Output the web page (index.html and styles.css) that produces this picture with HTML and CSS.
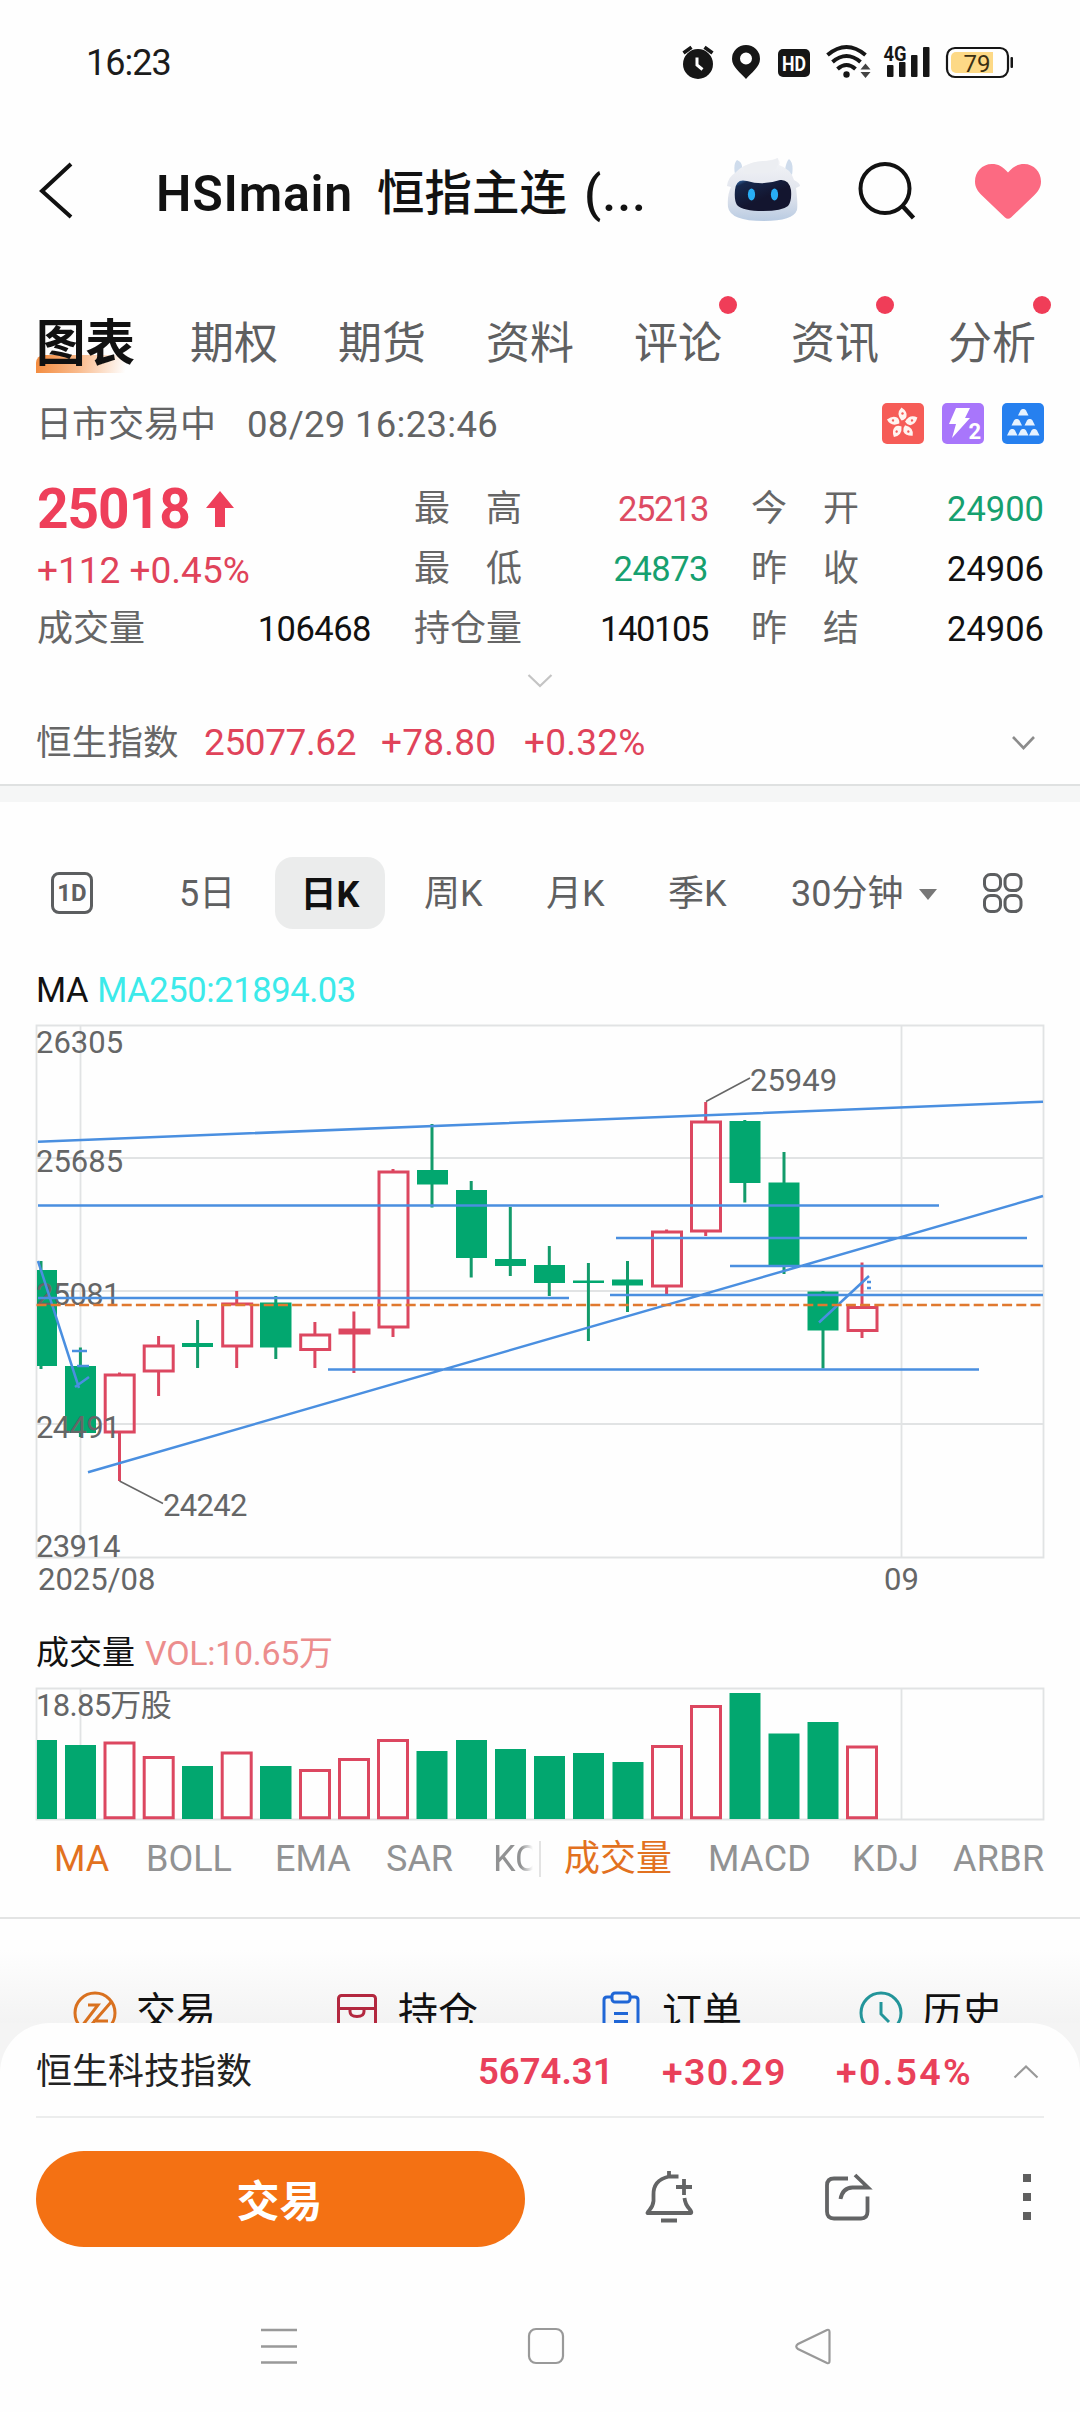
FILE: index.html
```html
<!DOCTYPE html>
<html lang="zh-CN">
<head>
<meta charset="utf-8">
<title>HSImain 恒指主连</title>
<link rel="stylesheet" href="styles.css">
</head>
<body>
<div class="screen">
  <div class="status">
    <span class="clock">16:23</span>
    <svg class="status-icons" viewBox="676 40 344 44" width="344" height="44">
      <g fill="#161616">
        <circle cx="698" cy="64" r="15"/>
        <path d="M683.5 53 691.5 47.2M712.5 53 704.500 47.2" stroke="#161616" stroke-width="3.6"/>
        <path d="M697 57.500V65l5.500 4.500" fill="none" stroke="#fff" stroke-width="3"/>
        <path fill-rule="evenodd" d="M746 45a14 14 0 0 0-14 14c0 8 9 14 14 20 5-6 14-12 14-20a14 14 0 0 0-14-14zm0 7.500a6 6 0 1 1 0 12 6 6 0 0 1 0-12z"/>
        <rect x="778" y="49" width="32" height="28" rx="5"/>
        <circle cx="846.500" cy="74.500" r="3.200"/>
        <path d="M865.500 63.500l5 6h-10zM865.500 78l5-6h-10z" fill="#444"/>
        <rect x="887" y="65" width="6.500" height="12" rx="1"/><rect x="899" y="62" width="6.500" height="15" rx="1"/>
        <rect x="911" y="55" width="6.500" height="22" rx="1"/><rect x="923" y="47" width="6.500" height="30" rx="1"/>
        <rect x="1010.500" y="57" width="2.500" height="11" rx="1"/>
      </g>
      <g fill="none" stroke="#161616" stroke-width="4">
        <path d="M827.500 55q19-16 38 0M832.500 62q14-12 28 0M837.500 69q9-8 18 0"/>
        <rect x="947" y="48" width="61" height="29" rx="8" stroke-width="2.200"/>
      </g>
      <path d="M956 52h37v21h-37a5 5 0 0 1-5-5V57a5 5 0 0 1 5-5z" fill="#fdd986"/>
      <text x="794" y="70.500" class="t-hd" textLength="24" lengthAdjust="spacingAndGlyphs">HD</text>
      <text x="883.500" y="60.500" class="t-4g" textLength="23" lengthAdjust="spacingAndGlyphs">4G</text>
      <text x="977" y="71.500" class="t-bat">79</text>
    </svg>
  </div>

  <header class="header">
    <svg class="back" viewBox="0 0 40 60" width="40" height="60"><path d="M34 4 5 31l29 26" fill="none" stroke="#111" stroke-width="4"/></svg>
    <h1 class="title"><span class="latin">HSImain</span><span class="cn">恒指主连</span><span class="more">(...</span></h1>
    <svg viewBox="720 150 330 80" width="330" height="80">
      <defs>
        <linearGradient id="head" x1="0" y1="0" x2="0" y2="1"><stop offset="0" stop-color="#f3f4f7"/><stop offset=".6" stop-color="#dfe3ec"/><stop offset="1" stop-color="#b9cbe2"/></linearGradient>
        <linearGradient id="visor" x1="0" y1="0" x2=".5" y2=".6"><stop offset="0" stop-color="#3f7fc4"/><stop offset=".25" stop-color="#16284c"/><stop offset="1" stop-color="#13152f"/></linearGradient>
      </defs>
      <path d="M735 174q-2-10 2-14 6 2 5 10zM785 170q1-8 4-11 5 4 3 16z" fill="#cfdcec"/>
      <path d="M727 186q1-9 8-13 8-9 22-11 14-1 20-4 4 4 2 7 12 4 15 15 6 3 6 6l-4 2q2 15 1 22-4 11-33 11-34 0-36-14-1-12 3-20z" fill="url(#head)"/>
      <path d="M743 167q10-6 20-6 10 0 15-3 1 5-1 9-4 6-14 6-12 0-20 1 2-3 0-7z" fill="#eceef2"/>
      <path d="M735 190q1-12 12-9 16 5 33-1 9-1 11 10 1 11-3 16-6 5-25 5-20 0-26-6-3-5-2-15z" fill="url(#visor)"/>
      <ellipse cx="751.500" cy="194.500" rx="3.600" ry="6" fill="#28aef5"/><ellipse cx="774.500" cy="194.500" rx="3.600" ry="6" fill="#28aef5"/>
      <circle cx="885" cy="188.500" r="24.500" fill="none" stroke="#111" stroke-width="4"/>
      <path d="M902.500 206l11 12" stroke="#111" stroke-width="4.500"/>
      <path d="M1008 172.500c5-6 10-8.500 16-8.500 10 0 17 8 17 17.500 0 6-3 10-7 14L1011 217.500q-3 2.500-6 0L982 195.500c-4-4-7-8-7-14 0-9.500 7-17.500 17-17.500 6 0 11 2.500 16 8.500z" fill="#fc6a82"/>
    </svg>
  </header>

  <nav class="tabs">
    <span class="tab on">图表</span><span class="tab">期权</span><span class="tab">期货</span><span class="tab">资料</span>
    <span class="tab dot">评论</span><span class="tab dot">资讯</span><span class="tab dot">分析</span>
  </nav>

  <div class="session">
    <span>日市交易中</span><span class="num">08/29 16:23:46</span>
    <svg viewBox="0 0 162 42" width="162" height="42">
      <rect width="42" height="41" rx="5" fill="#f65c57"/><rect x="60" width="42" height="41" rx="5" fill="#a876fb"/><rect x="120" width="42" height="41" rx="5" fill="#2680ef"/>
      <g fill="#fff4f0" transform="translate(20.500 20.500)">
        <g id="petal"><path d="M-1-3Q-7-10-1-16 5-12 4-7 3-4-1-3z"/><circle cx="0" cy="-10" r="1.200" fill="#f65c57"/></g>
        <use href="#petal" transform="rotate(72)"/><use href="#petal" transform="rotate(144)"/><use href="#petal" transform="rotate(216)"/><use href="#petal" transform="rotate(288)"/>
      </g>
      <path d="M74 5h14l-5 10h5L70 35l4-14h-7z" fill="#fff"/>
      <text x="86.500" y="36" class="t-lv">2</text>
      <g fill="#e6f2ff"><path id="ingot" d="M136 12.500l2.500-5q.8-1.500 2-1.500h1.500q1.200 0 2 1.500l2.500 5z"/><use href="#ingot" x="-6.500" y="10"/><use href="#ingot" x="6.500" y="10"/><use href="#ingot" x="-11" y="20"/><use href="#ingot" y="20"/><use href="#ingot" x="11" y="20"/></g>
    </svg>
  </div>

  <section class="quote">
    <div class="price">25018<svg viewBox="0 0 28 36" width="28" height="36"><path d="M14 0l14 17H19v19H9V17H0z" fill="#ee3f5a"/></svg></div>
    <span class="k wide">最高</span><span class="v up tight">25213</span><span class="k wide">今开</span><span class="v down">24900</span>
    <div class="change">+112 +0.45%</div>
    <span class="k wide">最低</span><span class="v down snug-v">24873</span><span class="k wide">昨收</span><span class="v">24906</span>
    <span class="k first">成交量</span><span class="v snug-v">106468</span>
    <span class="k">持仓量</span><span class="v tight">140105</span><span class="k wide">昨结</span><span class="v">24906</span>
  </section>
  <div class="expand"><svg viewBox="0 0 26 16" width="26" height="16"><path d="M1.500 2 13 13 24.500 2" fill="none" stroke="#c4c4c4" stroke-width="2.200"/></svg></div>

  <div class="index-row">
    <span class="cn">恒生指数</span><span class="last">25077.62</span><span>+78.80</span><span>+0.32%</span>
    <svg viewBox="0 0 24 16" width="24" height="16"><path d="M2 2 12.500 13 23 2" fill="none" stroke="#8c8c8c" stroke-width="2.600"/></svg>
  </div>
  <div class="band"></div>

  <nav class="periods">
    <span class="one-d">1D</span>
    <span>5日</span><span class="on">日K</span><span>周K</span><span>月K</span><span>季K</span>
    <span class="minutes">30分钟<i></i></span>
    <svg viewBox="0 0 42 42" width="42" height="42"><g fill="none" stroke="#5c5e60" stroke-width="3"><rect x="2.500" y="2.500" width="16" height="16" rx="6"/><rect x="23" y="2.500" width="16" height="16" rx="6"/><rect x="2.500" y="23.500" width="16" height="16" rx="6"/><rect x="23" y="23.500" width="16" height="16" rx="6"/></g></svg>
  </nav>

  <div class="legend ma"><span>MA</span><span class="cyan">MA250:21894.03</span></div>

  <svg class="kline" viewBox="0 1020 1080 580" width="1080" height="580">
    <g class="gridline"><path d="M36.500 1025.500H1043.500V1557.500H36.500zM36.500 1158H1043.500M36.500 1291H1043.500M36.500 1424H1043.500M80.500 1025V1557M901.500 1025V1557"/></g>
    <g class="g">
      <path d="M41 1261V1369M80.400 1347.500V1437M197.600 1320V1368M275.800 1296V1359M432 1124V1207.500M471.200 1181V1277.500M510.300 1207V1276M549.300 1246V1296M588.400 1263V1341M627.500 1261V1312M744.800 1120V1202.500M784 1152V1274M823 1291V1368.500"/>
      <rect x="37" y="1270" width="20" height="96"/><rect x="65" y="1366" width="31" height="67"/><rect x="182" y="1343" width="31" height="4"/>
      <rect x="260" y="1302.500" width="31.500" height="45"/><rect x="417" y="1170" width="31" height="14.500"/><rect x="456" y="1190" width="31" height="68"/>
      <rect x="495" y="1259" width="31" height="7"/><rect x="534" y="1265" width="31" height="18"/><rect x="573" y="1280.500" width="31" height="2.500"/>
      <rect x="612" y="1279.500" width="31" height="6"/><rect x="729.500" y="1121" width="31" height="62"/><rect x="768.500" y="1182.500" width="31" height="84.500"/><rect x="807.500" y="1291.500" width="31" height="39"/>
    </g>
    <g class="r">
      <path d="M119.500 1372.500V1375M119.500 1432V1481M158.600 1336V1346M158.600 1371V1396M236.700 1291V1304M236.700 1346V1368M314.900 1322V1335M314.900 1350V1368M353.900 1311.500V1373M393 1169V1172M393 1327V1337M666.600 1229.500V1232M666.600 1286V1294M705.700 1102V1122M705.700 1231V1236M862 1262.500V1308M862 1331V1338"/>
      <rect x="105.200" y="1375" width="29" height="57"/><rect x="144.200" y="1346" width="29" height="25"/><rect x="222.700" y="1304" width="29" height="42"/>
      <rect x="300.700" y="1335" width="29" height="14.500"/><rect x="340" y="1330" width="29" height="3"/><rect x="379" y="1172" width="29" height="155"/>
      <rect x="652.500" y="1232" width="29" height="54"/><rect x="691.500" y="1122" width="29" height="109"/><rect x="848" y="1307.500" width="29" height="23"/>
    </g>
    <g class="axis">
      <text x="36" y="1053">26305</text><text x="36" y="1172">25685</text><text x="36" y="1305" class="snug">25081</text><text x="36" y="1438" class="snug">24491</text><text x="36" y="1557" class="snug">23914</text>
      <text x="163" y="1516" class="snug">24242</text><text x="750" y="1091">25949</text><text x="38" y="1590">2025/08</text><text x="884" y="1590">09</text>
    </g>
    <path d="M119.500 1481 163 1503.500M706 1101.500 750 1078" stroke="#666" stroke-width="1.500"/>
    <g class="draw">
      <path d="M38 1141.700 1043 1101.800M38 1205.500H939M616 1238H1027M730 1266H1043M610 1295H1043M38 1298H569M328 1369.500H979M88 1472.300 1043 1196"/>
      <path d="M38 1261 79 1388M75 1387 89 1377M72 1351H87M77 1366H89M819 1322.500 869 1276M867 1282H871M867 1288H871"/>
    </g>
    <path d="M36.500 1305H1043" stroke="#e0792f" stroke-width="2.400" stroke-dasharray="10 4.200"/>
  </svg>

  <div class="legend vol"><span>成交量</span><span class="pink">VOL:10.65万</span></div>

  <svg class="volume" viewBox="0 1684 1080 138" width="1080" height="138">
    <g class="gridline"><path d="M36.500 1688.500H1043.500V1819.500H36.500zM80.500 1688V1819M901.500 1688V1819"/></g>
    <g class="g">
      <path class="fill" d="M37 1740H57V1819H37zM65 1745H96V1819H65zM182 1766H213V1819H182zM260 1766H291.500V1819H260zM416.500 1751H447.500V1819H416.500zM456 1740H487V1819H456zM495 1749H526V1819H495zM534 1756H565V1819H534zM573 1753H604V1819H573zM612.500 1762H643.500V1819H612.500zM729.500 1693H760.500V1819H729.500zM768.500 1733.500H799.500V1819H768.500zM807.500 1722H838.500V1819H807.500z"/>
    </g>
    <g class="r">
      <path d="M105 1743H134V1817.700H105zM144.200 1757.500H173.200V1817.700H144.200zM222.200 1753H251.200V1817.700H222.200zM300.500 1770.500H329.500V1817.700H300.500zM339.500 1759.500H368.500V1817.700H339.500zM378.500 1740.500H407.500V1817.700H378.500zM652.500 1746.500H681.500V1817.700H652.500zM691.500 1706.500H720.500V1817.700H691.500zM847.500 1747H876.500V1817.700H847.500z"/>
    </g>
    <g class="axis"><text x="36" y="1716" class="snug">18.85万股</text></g>
  </svg>

  <div class="indicators">
    <div class="main"><span class="on">MA</span><span>BOLL</span><span>EMA</span><span>SAR</span><span>KC</span></div>
    <div class="sub"><span class="on">成交量</span><span>MACD</span><span>KDJ</span><span>ARBR</span></div>
  </div>

  <div class="shortcuts">
    <div><svg viewBox="0 0 44 44" width="44" height="44"><g fill="none" stroke="#d9711f" stroke-width="3"><circle cx="22" cy="22" r="20"/><path d="M15 14h10L9 35M39 10 19 33M35 30H20"/></g></svg><span>交易</span></div>
    <div><svg viewBox="0 0 44 44" width="44" height="44"><g fill="none" stroke="#b3283f" stroke-width="3"><rect x="3.500" y="4.500" width="37" height="38" rx="3"/><path d="M3 17.500H41M15 17.500v3q0 5 7 5t7-5v-3"/></g></svg><span>持仓</span></div>
    <div><svg viewBox="0 0 44 44" width="44" height="44"><g fill="none" stroke="#1f66d6" stroke-width="3"><path d="M13 6H8q-3 0-3 3v33h34V9q0-3-3-3h-5"/><rect x="13" y="2" width="18" height="9" rx="3"/><path d="M15 22.500H29M15 30.500H29"/></g></svg><span>订单</span></div>
    <div><svg viewBox="0 0 44 44" width="44" height="44"><g fill="none" stroke="#23959a" stroke-width="3"><circle cx="22" cy="22" r="20"/><path d="M22 11V23l8 8"/></g></svg><span>历史</span></div>
  </div>

  <footer class="sheet">
    <div class="ticker"><span class="cn">恒生科技指数</span><span>5674.31</span><span class="delta">+30.29</span><span class="delta pct">+0.54%</span>
      <svg viewBox="0 0 26 16" width="26" height="16"><path d="M1.500 13.500 13 2.500 24.500 13.500" fill="none" stroke="#999" stroke-width="2.200"/></svg></div>
    <div class="actions">
      <button class="trade">交易</button>
      <svg viewBox="640 2163 400 72" width="400" height="72">
        <g fill="none" stroke="#636465" stroke-width="3.800">
          <path d="M678.500 2176.500H669Q653 2180 653.500 2195v6q-.5 5-4 9-3.500 4-1 3H690.500q2 0-1-4-4.500-5-5-11"/>
          <path d="M669 2171V2177M661 2220.500H677M684 2179V2195M676 2187H692"/>
          <path d="M848 2178.500H834q-7 0-7 7v26q0 7 7 7h27q6.500 0 6.500-7V2196.500M840.500 2199q2-11 12-11.500H868L855 2175"/>
        </g>
        <path d="M1023 2174h8v8h-8zM1023 2193h8v8h-8zM1023 2212h8v8h-8z" fill="#5f5f5f"/>
      </svg>
    </div>
    <div class="sysnav">
      <svg viewBox="0 0 38 38" width="38" height="38"><path d="M1 3H37M1 19.500H37M1 35.500H37" stroke="#999" stroke-width="2.600"/></svg>
      <svg viewBox="0 0 38 38" width="38" height="38"><rect x="2" y="2" width="34" height="34" rx="7" fill="none" stroke="#999" stroke-width="2.200"/></svg>
      <svg viewBox="0 0 38 38" width="38" height="38"><path d="M33 3 4 17q-3.500 2.500 0 5L33 36q2.500 1 2.500-2V5q0-3-2.500-2z" fill="none" stroke="#999" stroke-width="2.200"/></svg>
    </div>
  </footer>
</div>
</body>
</html>
```
FILE: styles.css
```css
* { box-sizing: border-box; }
body { margin: 0; background: #fefefe; color: #121212; font-family: Roboto, "Noto Sans CJK SC", sans-serif; }
svg { display: block; flex: none; }
span { white-space: nowrap; }
.screen { width: 1080px; height: 2412px; display: flex; flex-direction: column; overflow: hidden; background: #fefefe; }
.screen > * { flex: none; }

.status { height: 124px; padding: 0 60px 0 86px; display: flex; align-items: center; justify-content: space-between; color: #1c1c1c; }
.clock { font-size: 36px; letter-spacing: -1px; line-height: 44px; padding-top: 1px; }
.t-hd { font: 700 21px Roboto, sans-serif; fill: #fff; text-anchor: middle; }
.t-4g { font: 700 21px Roboto, sans-serif; fill: #161616; }
.t-bat { font: 400 24px Roboto, sans-serif; fill: #3a2f14; text-anchor: middle; }
.t-lv { font: 700 22px Roboto, sans-serif; fill: #fff; }

.header { height: 132px; padding: 0 30px 0 37px; display: flex; align-items: center; justify-content: space-between; }
.title { margin: 0 auto 0 79px; padding-top: 7px; display: flex; align-items: center; font-weight: 500; font-size: 50px; line-height: 60px; }
.title .latin { width: 221px; letter-spacing: .8px; font-weight: 600; }
.title .cn { width: 207px; font-size: 47.500px; }
.title .more { letter-spacing: 1px; }

.tabs { height: 134px; padding: 41px 0 0 36px; display: grid; grid-template-columns: 154px 148px 148px 148px 157px 157px 100px; align-items: center; font-size: 44px; line-height: 60px; color: #5f6061; }
.tab { position: relative; z-index: 1; }
.tab.on { font-size: 49.500px; font-weight: 700; color: #111; }
.tab.on::before { content: ""; position: absolute; z-index: -1; left: 0; bottom: 1px; width: 94px; height: 18px; border-radius: 8px 0 0 0; background: linear-gradient(100deg, #f38a3c, #f9b98a 45%, #fefefe 95%); }
.tab.dot::after { content: ""; position: absolute; left: 85px; top: -18px; width: 18px; height: 18px; border-radius: 50%; background: #f03d58; }

.session { height: 66px; padding: 1px 36px 0; display: grid; grid-template-columns: 211px 1fr 162px; align-items: center; font-size: 36px; line-height: 44px; color: #636465; }
.session .num { font-size: 36.500px; letter-spacing: .3px; }
.session span { padding-top: 2px; }

.quote { height: 184px; padding: 22px 36px 0 37px; display: grid; grid-template-columns: 167px 167px 174px 163px 173px 163px; grid-template-rows: 60px 60px 60px; align-items: center; color: #111; line-height: 44px; margin-bottom: 6px; }
.quote .price { grid-column: 1 / 3; display: flex; align-items: center; gap: 16px; font-size: 55px; font-weight: 700; letter-spacing: -1px; color: #ee3f5a; padding-top: 2px; }
.quote .change { grid-column: 1 / 3; font-size: 37px; color: #e0435a; padding-top: 5px; }
.k { font-size: 36px; color: #666; padding-left: 43px; padding-top: 1px; }
.k.first { padding-left: 0; }
.k.wide { letter-spacing: 36px; }
.v { font-size: 34.500px; text-align: right; padding-top: 1px; }
.v.tight { letter-spacing: -1.400px; }
.v.snug-v { letter-spacing: -.5px; }
.up { color: #dd4b62; }
.down { color: #16a06f; }
.expand { height: 50px; padding-top: 27px; display: flex; justify-content: center; }

.index-row { height: 84px; padding: 2px 45px 0 36px; display: grid; grid-template-columns: 168px 177px 143px 1fr 24px; align-items: center; font-size: 37px; line-height: 44px; letter-spacing: .2px; color: #e0435a; margin-top: 4px; }
.index-row .cn { font-size: 35.500px; color: #666; }
.index-row .last { letter-spacing: -.4px; }
.band { height: 18px; border-top: 2px solid #dfe1e1; background: #f5f6f6; }

.periods { height: 144px; margin-top: 29px; padding: 0 36px 20px; display: grid; grid-template-columns: 143px 96px 110px 39px 122px 122px 123px 1fr 62px; align-items: center; font-size: 36px; line-height: 44px; color: #5f6061; }
.periods > span { padding-top: 2px; }
.periods .one-d { margin-left: 15px; padding: 0; width: 42px; height: 42px; border: 3px solid #5c5e60; border-radius: 8px; font-size: 24px; font-weight: 700; line-height: 36px; text-align: center; }
.periods .on { height: 72px; border-radius: 18px; background: #ebecec; color: #111; font-weight: 700; line-height: 72px; text-align: center; }
.periods .on + span { grid-column: 5; }
.minutes { display: flex; align-items: center; gap: 16px; }
.minutes i { border: 9px solid transparent; border-top: 11px solid #777; border-bottom: 0; }

.legend { display: flex; align-items: center; padding-left: 36px; }
.ma { height: 60px; gap: 9px; font-size: 34.500px; letter-spacing: -.4px; line-height: 44px; margin-top: -15px; }
.cyan { color: #3ceaea; }
.vol { height: 84px; padding-top: 22px; gap: 10px; font-size: 33px; line-height: 44px; }
.pink { color: #ec8d8d; font-size: 34px; letter-spacing: -.3px; }

.gridline { fill: none; stroke: #e1e3e4; stroke-width: 1.800; }
.g { fill: #02a76f; stroke: #139b6b; stroke-width: 3; }
.g rect, .g .fill { stroke: none; }
.r { fill: none; stroke: #dc4760; stroke-width: 3; }
.draw { fill: none; stroke: #4a8fe0; stroke-width: 2.500; }
.axis { font-size: 31px; fill: #656667; }
.snug { letter-spacing: -.7px; }

.indicators { height: 95px; padding: 0 36px 22px; display: grid; grid-template-columns: 505px 503px; align-items: center; font-size: 36px; line-height: 44px; color: #919293; }
.indicators .on { color: #e2711f; }
.main { height: 36px; padding-left: 18px; display: grid; grid-template-columns: 92px 129px 111px 107px 40px; align-content: center; border-right: 2px solid #e3e3e3; }
.main span:last-child { overflow: hidden; -webkit-mask-image: linear-gradient(90deg, #000 70%, transparent); mask-image: linear-gradient(90deg, #000 70%, transparent); }
.sub { padding-left: 23px; display: grid; grid-template-columns: 144px 144px 101px 91px; overflow: hidden; }
.sub span + span { letter-spacing: .3px; }

.shortcuts { height: 106px; padding: 52px 0 0 73px; border-top: 2px solid #e3e4e4; display: grid; grid-template-columns: 262px 264px 260px 200px; align-items: center; font-size: 40px; line-height: 44px; background: linear-gradient(#fefefe 30%, #f3f3f3); }
.shortcuts div { height: 44px; margin-top: 20px; display: flex; align-items: center; gap: 19px; color: #111; }

.sheet { flex: 1 0 auto; position: relative; z-index: 2; display: flex; flex-direction: column; background: #fefefe; border-radius: 50px 50px 0 0; box-shadow: 0 0 0 50px #f4f4f4; clip-path: inset(0); }
.ticker { height: 95px; margin: 0 36px; border-bottom: 2px solid #eceded; display: grid; grid-template-columns: 442px 184px 174px 1fr 26px; padding: 4px 5px 0 0; align-items: center; font-size: 36.500px; line-height: 44px; font-weight: 600; color: #e9405a; }
.ticker .cn { font-weight: 400; font-size: 36px; color: #222; }
.ticker .delta { font-size: 37.500px; letter-spacing: 1.300px; }
.ticker .pct { letter-spacing: 2.300px; }
.actions { margin-top: 33px; padding: 0 40px 0 36px; height: 96px; display: flex; align-items: center; justify-content: space-between; }
.trade { width: 489px; height: 96px; padding: 0 2px 2px 0; border: 0; border-radius: 48px; background: #f47113; color: #fff; font: 700 43px "Noto Sans CJK SC", sans-serif; }
.sysnav { margin-top: 80px; padding: 0 248px 0 260px; display: flex; justify-content: space-between; }
```
